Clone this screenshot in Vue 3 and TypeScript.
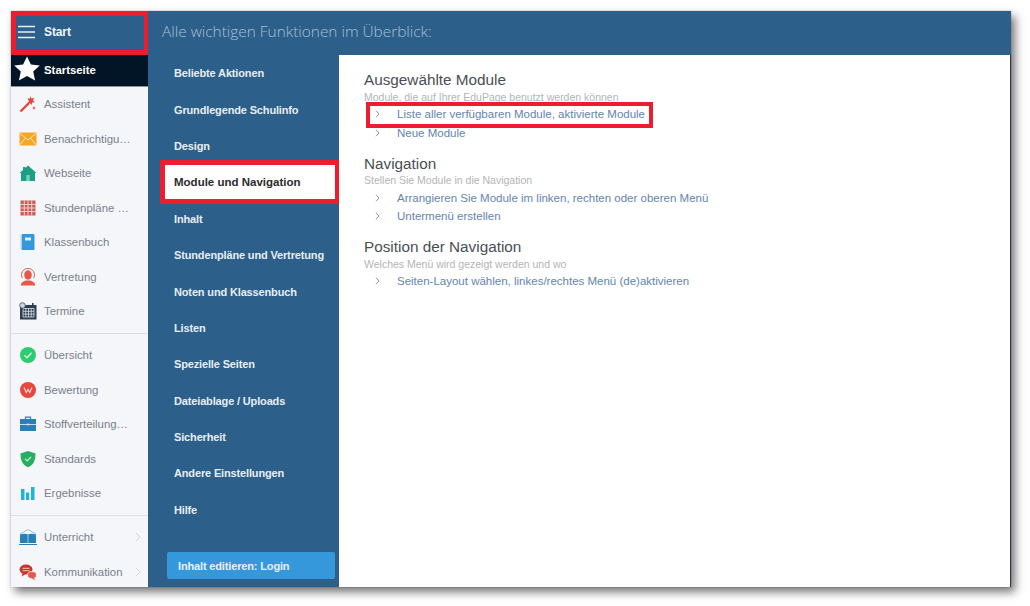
<script setup lang="ts">
interface SideItem { label: string; icon: string; arrow?: boolean }
const groups: SideItem[][] = [
  [
    { label: 'Assistent', icon: 'wand' },
    { label: 'Benachrichtigu…', icon: 'mail' },
    { label: 'Webseite', icon: 'home' },
    { label: 'Stundenpläne …', icon: 'table' },
    { label: 'Klassenbuch', icon: 'book' },
    { label: 'Vertretung', icon: 'person' },
    { label: 'Termine', icon: 'calendar' },
  ],
  [
    { label: 'Übersicht', icon: 'check' },
    { label: 'Bewertung', icon: 'rating' },
    { label: 'Stoffverteilung…', icon: 'case' },
    { label: 'Standards', icon: 'shield' },
    { label: 'Ergebnisse', icon: 'bars' },
  ],
  [
    { label: 'Unterricht', icon: 'school', arrow: true },
    { label: 'Kommunikation', icon: 'chat', arrow: true },
  ],
]
const navItems = [
  'Beliebte Aktionen', 'Grundlegende Schulinfo', 'Design', 'Module und Navigation', 'Inhalt',
  'Stundenpläne und Vertretung', 'Noten und Klassenbuch', 'Listen', 'Spezielle Seiten',
  'Dateiablage / Uploads', 'Sicherheit', 'Andere Einstellungen', 'Hilfe',
]
const sections = [
  { title: 'Ausgewählte Module', sub: 'Module, die auf Ihrer EduPage benutzt werden können',
    links: [{ t: 'Liste aller verfügbaren Module, aktivierte Module', mark: true }, { t: 'Neue Module', mark: false }] },
  { title: 'Navigation', sub: 'Stellen Sie Module in die Navigation',
    links: [{ t: 'Arrangieren Sie Module im linken, rechten oder oberen Menü', mark: false }, { t: 'Untermenü erstellen', mark: false }] },
  { title: 'Position der Navigation', sub: 'Welches Menü wird gezeigt werden und wo',
    links: [{ t: 'Seiten-Layout wählen, linkes/rechtes Menü (de)aktivieren', mark: false }] },
]
</script>

<template>
  <div class="page">
    <div class="window">
      <aside class="sidebar">
        <div class="start marked">
          <svg class="burger" width="18" height="14" viewBox="0 0 18 14"><path d="M0 1.5h17M0 7h17M0 12.5h17" stroke="#e8eef3" stroke-width="1.6" /></svg>
          <span>Start</span>
        </div>
        <div class="home-row">
          <svg class="star" width="26" height="26" viewBox="0 0 26 26"><path d="M13 .5l3.900 8.100 8.900 1-6.600 5.900 1.900 9-8.100-4.600-8.100 4.600 1.900-9L.2 9.600l8.900-1z" fill="#fff" /></svg>
          <span>Startseite</span>
        </div>
        <div v-for="(group, g) in groups" :key="g" class="group">
          <div v-for="item in group" :key="item.label" class="side-item">
            <svg class="icon" width="18" height="18" viewBox="0 0 18 18">
              <template v-if="item.icon === 'wand'">
                <path d="M1.500 16.500L10 8" stroke="#e8433a" stroke-width="2.400" />
                <path d="M11.500 1l1 2.600 2.700-.6-1.200 2.500 2 1.800-2.800.2-.7 2.600-1.600-2.200-2.600.6 1.600-2.200L8.500 3l2.400.7z" fill="#e8433a" />
                <path d="M15 11l.6 1.400 1.400.6-1.400.6-.6 1.400-.6-1.400-1.400-.6 1.400-.6z" fill="#e8433a" />
              </template>
              <template v-else-if="item.icon === 'mail'">
                <rect x="0.5" y="2.500" width="17" height="13" fill="#f5a623" />
                <path d="M.5 3l8.500 7 8.500-7M.5 15.500L6.500 8M17.500 15.500L11.500 8" stroke="#fde6bd" stroke-width="1" fill="none" />
              </template>
              <template v-else-if="item.icon === 'home'">
                <path d="M9 1.500L17.500 9H16v8H2V9H.5L4 5.900V3h2.300v.9z" fill="#1b9e82" />
                <rect x="7.300" y="11" width="3.400" height="6" fill="#7fcdbb" />
              </template>
              <template v-else-if="item.icon === 'table'">
                <rect x="1.500" y="1.500" width="15" height="15" fill="#c0392b" opacity=".8" />
                <path d="M1.500 5.500h15M1.500 9h15M1.500 12.500h15M5.300 1.500v15M9 1.500v15M12.700 1.500v15" stroke="#f3d9d5" stroke-width=".9" />
              </template>
              <template v-else-if="item.icon === 'book'">
                <rect x="2.500" y="1" width="13" height="16" rx="1" fill="#3498db" />
                <rect x="1.500" y="2" width="1.500" height="14" fill="#a8d3f0" />
                <rect x="6" y="4.500" width="6" height="3" fill="#dff0fb" />
              </template>
              <template v-else-if="item.icon === 'person'">
                <path d="M3.300 10A6.500 6.500 0 1 1 14.700 10" fill="none" stroke="#e8574a" stroke-width="1" />
                <ellipse cx="9" cy="7" rx="3.800" ry="4.700" fill="#e8574a" />
                <path d="M1.800 17.500c0-3 2.600-4.200 5-5h4.400c2.400.8 5 2 5 5z" fill="#e8574a" />
              </template>
              <template v-else-if="item.icon === 'calendar'">
                <rect x="1" y="3" width="16.500" height="14.500" fill="#2c3e50" />
                <path d="M4 6.500h11v8.500H4zM4 9.300h11M4 12.100h11M6.800 6.500v8.500M9.500 6.500v8.500M12.200 6.500v8.500" fill="none" stroke="#dfe4e8" stroke-width=".8" />
                <circle cx="3.500" cy="3.500" r="2.800" fill="#cfd6db" stroke="#2c3e50" stroke-width=".7" />
                <rect x="13" y="1" width="1.600" height="3" fill="#2c3e50" />
              </template>
              <template v-else-if="item.icon === 'check'">
                <circle cx="9" cy="9" r="8" fill="#2ecc71" />
                <path d="M5.500 9.200l2.500 2.500 4.500-5" fill="none" stroke="#d7f7e3" stroke-width="1.300" />
              </template>
              <template v-else-if="item.icon === 'rating'">
                <circle cx="9" cy="9" r="8" fill="#e8473c" />
                <path d="M5 6.500l2.300 5 1.700-3 1.700 3 2.300-5" fill="none" stroke="#fad6d2" stroke-width="1.200" />
              </template>
              <template v-else-if="item.icon === 'case'">
                <path d="M6.500 4V2.200h5V4" fill="none" stroke="#2980b9" stroke-width="1.200" />
                <rect x="1" y="4" width="16" height="12" fill="#2980b9" />
                <path d="M1 9.500h16" stroke="#d4e8f6" stroke-width=".9" />
                <rect x="7.800" y="8.700" width="2.400" height="1.600" fill="#d4e8f6" />
              </template>
              <template v-else-if="item.icon === 'shield'">
                <path d="M9 1l7.500 2.500c0 6.500-1.500 11-7.500 13.800C3 14.500 1.500 10 1.500 3.500z" fill="#27ae60" />
                <path d="M6 8.800l2.200 2.200 3.800-4.200" fill="none" stroke="#cdf1dc" stroke-width="1.200" />
              </template>
              <template v-else-if="item.icon === 'bars'">
                <rect x="2" y="5" width="3.500" height="11" fill="#1bb5d8" />
                <rect x="7" y="8.500" width="3.200" height="7.500" fill="#1bb5d8" />
                <rect x="12" y="3" width="3.500" height="13" fill="#1bb5d8" />
              </template>
              <template v-else-if="item.icon === 'school'">
                <path d="M1 6L9 1.500 17 6" fill="none" stroke="#8fbfe0" stroke-width="1" />
                <path d="M1 6.500c3-1 6-1 8 0 2-1 5-1 8 0V15H1z" fill="#2980b9" />
                <path d="M9 6.500V15" stroke="#b7d8ee" stroke-width=".8" />
                <path d="M0 16.500h18" stroke="#2980b9" stroke-width="1" />
              </template>
              <template v-else>
                <ellipse cx="7" cy="6.500" rx="6.500" ry="5" fill="#c0392b" />
                <path d="M3.500 10l-.8 3.500 4-2.500z" fill="#c0392b" />
                <ellipse cx="13" cy="12" rx="4.500" ry="3.500" fill="#d9604f" stroke="#fff" stroke-width=".7" />
                <path d="M14.500 14.500l2 3-4.500-2.500z" fill="#d9604f" />
                <path d="M3.500 5.300h7M3.500 7.700h7" stroke="#f5d5d0" stroke-width=".9" />
              </template>
            </svg>
            <span class="side-label">{{ item.label }}</span>
            <svg v-if="item.arrow" class="chev" width="6" height="10" viewBox="0 0 6 10"><path d="M1 1l4 4-4 4" fill="none" stroke="#d0d3d8" stroke-width="1" /></svg>
          </div>
        </div>
      </aside>

      <div class="right">
        <header class="topbar">Alle wichtigen Funktionen im Überblick:</header>
        <div class="body">
          <nav class="nav">
            <div class="nav-list">
              <a v-for="n in navItems" :key="n" class="nav-item" :class="{ selected: n === 'Module und Navigation' }">{{ n }}</a>
            </div>
            <button class="login">Inhalt editieren: Login</button>
          </nav>
          <main class="main">
            <section v-for="s in sections" :key="s.title" class="section">
              <h3>{{ s.title }}</h3>
              <p>{{ s.sub }}</p>
              <div v-for="l in s.links" :key="l.t" class="link" :class="{ marked: l.mark }">
                <svg width="5" height="8" viewBox="0 0 5 8"><path d="M1 .8L4 4 1 7.200" fill="none" stroke="#9a8f96" stroke-width="1" /></svg>
                <span>{{ l.t }}</span>
              </div>
            </section>
          </main>
        </div>
      </div>
    </div>
  </div>
</template>

<style>
html, body { margin: 0; background: #fff; }
</style>

<style scoped>
.page {
  width: 1030px;
  height: 606px;
  padding: 11px 19px 19px 11px;
  box-sizing: border-box;
  overflow: hidden;
  font-family: "Liberation Sans", Arial, sans-serif;
}
.window {
  width: 1000px;
  height: 576px;
  display: flex;
  background: #2c5f8a;
  box-shadow: 4px 5px 9px rgba(0, 0, 0, .55);
  outline: 1px solid rgba(0, 0, 0, .06);
}
.sidebar {
  width: 137px;
  flex: none;
  background: #f4f6f9;
  overflow: hidden;
}
.start {
  height: 43px;
  box-sizing: border-box;
  background: #2c5f8a;
  display: flex;
  align-items: center;
  gap: 9px;
  padding: 0 0 2px 7px;
  color: #f0f4f7;
  font-size: 12px;
  font-weight: 700;
  letter-spacing: -.1px;
  position: relative;
}
.start.marked::after {
  content: "";
  position: absolute;
  inset: 0 0 -1px 0;
  border: 5px solid #ed1c2e;
  border-right-width: 4px;
  pointer-events: none;
}
.burger { margin-right: -1px; }
.home-row {
  height: 33px;
  box-sizing: border-box;
  background: #021527;
  display: flex;
  align-items: center;
  gap: 4px;
  padding-left: 3px;
  color: #fff;
  font-size: 11.4px;
  font-weight: 700;
  border-bottom: 1px solid #8d9299;
}
.star { margin-top: -2px; }
.group { padding-bottom: 4.5px; border-bottom: 1px solid #dcdfe4; margin-bottom: 4px; }
.group:last-child { border: 0; margin: 0; }
.side-item {
  height: 34.5px;
  display: flex;
  align-items: center;
  padding-left: 8px;
  color: #7b7f8c;
  font-size: 11.4px;
  position: relative;
}
.icon { flex: none; width: 18px; height: 18px; margin-right: 7px; }
.side-label { white-space: nowrap; }
.chev { position: absolute; left: 124px; top: 12px; }
.right { flex: 1; display: flex; flex-direction: column; min-width: 0; }
.topbar {
  height: 44px;
  flex: none;
  box-sizing: border-box;
  display: flex;
  align-items: center;
  padding: 0 0 3px 14px;
  color: #a8c0d2;
  font-family: "Open Sans", sans-serif;
  font-size: 15.4px;
  font-weight: 300;
}
.body { flex: 1; display: flex; min-height: 0; }
.nav {
  width: 191px;
  flex: none;
  display: flex;
  flex-direction: column;
  justify-content: space-between;
  padding: 0 4px 8px 0;
  box-sizing: border-box;
}
.nav-item {
  display: flex;
  align-items: center;
  height: 36.4px;
  padding-left: 26px;
  color: #e8eef3;
  font-size: 11px;
  letter-spacing: -.15px;
  font-weight: 700;
  position: relative;
  white-space: nowrap;
}
.nav-item.selected {
  color: #2b2b2b;
  background: #fff;
  margin-left: 16px;
  margin-right: -4px;
  padding-left: 10px;
  font-size: 11.5px;
  letter-spacing: 0;
}
.nav-item.selected::after {
  content: "";
  position: absolute;
  inset: -4.5px 0 -3px -4px;
  border: 5px solid #ed1c2e;
  border-right-width: 4px;
}
.login {
  margin-left: 19px;
  height: 27px;
  border: 0;
  border-radius: 2px;
  background: #3498db;
  color: #e6f2fa;
  font: 700 11px "Liberation Sans", Arial, sans-serif;
  letter-spacing: -.15px;
  text-align: left;
  padding: 0 0 0 11px;
}
.main {
  flex: 1;
  background: #fff;
  padding: 16px 0 0 25px;
  border-right: 1px solid #2b3440;
}
.section { margin-bottom: 12.5px; }
h3 {
  margin: 0;
  font-size: 15.3px;
  line-height: 18px;
  font-weight: 400;
  color: #4a4e54;
}
p {
  margin: 1.5px 0 2.5px;
  font-size: 10.5px;
  line-height: 12px;
  color: #b4b4b4;
}
.link {
  height: 18.5px;
  display: flex;
  align-items: center;
  gap: 17px;
  padding-left: 11px;
  color: #6385b0;
  font-size: 11.5px;
  position: relative;
  width: fit-content;
}
.link.marked::after {
  content: "";
  position: absolute;
  inset: -3.5px -8px -4px 2px;
  border: 4px solid #ed1c2e;
}
</style>
